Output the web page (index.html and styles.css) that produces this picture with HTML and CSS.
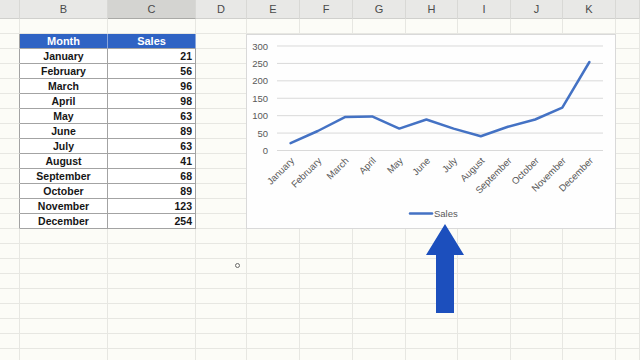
FILE: index.html
```html
<!DOCTYPE html>
<html>
<head>
    <title>Sales Chart</title>
    <link rel="stylesheet" href="styles.css">
</head>
<body>
    <div id="app">
        <div id="colHeads" class="cols"></div>
        <div id="sheet" class="cols"></div>

        <div id="chart">
            <svg id="chartSvg" width="370" height="195" viewBox="246 34 370 195"></svg>
        </div>

        <svg id="arrow" width="50" height="100" viewBox="0 0 50 100">
            <polygon points="25,4 44,35 34,35 34,93 16,93 16,35 6,35" fill="#1c4fbd"/>
        </svg>

        <div id="cursor"></div>
    </div>
    <script>
        var letters = ['', 'B', 'C', 'D', 'E', 'F', 'G', 'H', 'I', 'J', 'K', ''];
        var months = ['January', 'February', 'March', 'April', 'May', 'June', 'July', 'August', 'September', 'October', 'November', 'December'];
        var sales = [21, 56, 96, 98, 63, 89, 63, 41, 68, 89, 123, 254];

        // column letters
        var heads = document.getElementById('colHeads');
        letters.forEach(function(l, i) {
            var h = document.createElement('div');
            h.className = 'colHead' + (l == 'C' ? ' active' : '');
            h.textContent = l;
            heads.appendChild(h);
        });

        // cells
        var sheet = document.getElementById('sheet');
        for (var r = 0; r < 23; r++) {
            for (var c = 0; c < letters.length; c++) {
                var cell = document.createElement('div');
                cell.className = 'cell';
                if (r >= 1 && r <= 13) {
                    if (c == 0) cell.className += ' edge';
                    if (c == 1 || c == 2) {
                        if (r == 1) {
                            cell.className += ' th';
                            cell.textContent = c == 1 ? 'Month' : 'Sales';
                        } else {
                            cell.className += c == 1 ? ' td month' : ' td num';
                            cell.textContent = c == 1 ? months[r - 2] : sales[r - 2];
                        }
                    }
                }
                sheet.appendChild(cell);
            }
        }

        // line chart
        var svg = document.getElementById('chartSvg');
        var left = 277, right = 603, zero = 150.5, scale = 104.5 / 300;
        var step = (right - left) / 12;
        var out = '<rect x="246.5" y="34.5" width="369" height="194" fill="#fefefe" stroke="#d9d9d9"/>';
        for (var v = 0; v <= 300; v += 50) {
            var y = zero - v * scale;
            out += '<line x1="' + left + '" x2="' + right + '" y1="' + y + '" y2="' + y + '" class="grid"/>';
            out += '<text x="268" y="' + (y + 3.5) + '" text-anchor="end" class="lbl">' + v + '</text>';
        }
        var pts = [];
        sales.forEach(function(s, i) {
            var x = left + step / 2 + step * i;
            pts.push(x.toFixed(1) + ',' + (zero - s * scale).toFixed(1));
            var tx = x + 2, ty = 159;
            out += '<text x="' + tx + '" y="' + ty + '" dy=".35em" text-anchor="end" class="lbl" transform="rotate(-45 ' + tx + ' ' + ty + ')">' + months[i] + '</text>';
        });
        out += '<polyline points="' + pts.join(' ') + '" class="series"/>';
        out += '<line x1="410" x2="432" y1="213.5" y2="213.5" class="series"/>';
        out += '<text x="434" y="217" class="lbl">Sales</text>';
        svg.innerHTML = out;
    </script>
</body>
</html>
```

FILE: styles.css
```css
body {
    margin: 0;
    font-family: "Liberation Sans", Arial, sans-serif;
    background: #fcfcf7;
    overflow: hidden;
}
#app {
    position: relative;
    width: 640px;
    height: 360px;
    overflow: hidden;
}
.cols {
    display: grid;
    grid-template-columns: 20px 88px 88px 51px 53px 53px 53px 52px 53px 52px 53px 24px;
}
#colHeads {
    height: 19px;
    background: #e8e8e6;
    border-bottom: 1px solid #d0d0cd;
    box-sizing: border-box;
}
.colHead {
    border-right: 1px solid #d8d8d5;
    font-size: 11px;
    color: #4a4a4a;
    text-align: center;
    line-height: 18px;
}
.colHead.active {
    background: #d4d4d1;
    border-bottom: 1px solid #a9a9a6;
}
#sheet {
    grid-auto-rows: 15px;
}
.cell {
    box-sizing: border-box;
    border-right: 1px solid #e7e7e2;
    border-bottom: 1px solid #e7e7e2;
    font-size: 10.5px;
    font-weight: bold;
    line-height: 14px;
    color: #161616;
    padding: 0 3px;
    white-space: nowrap;
    overflow: hidden;
}
.cell.edge {
    border-right-color: #a3a3a3;
}
.cell.th {
    background: #2f63c4;
    color: #fff;
    text-align: center;
    font-size: 11px;
    border-right-color: #8aa6dc;
    border-bottom-color: #a3a3a3;
}
.cell.td {
    background: #fff;
    border-right-color: #a3a3a3;
    border-bottom-color: #a3a3a3;
}
.cell.month {
    text-align: center;
}
.cell.num {
    text-align: right;
}
#chart {
    position: absolute;
    left: 246px;
    top: 34px;
    width: 370px;
    height: 195px;
}
#chart svg {
    display: block;
}
.grid {
    stroke: #d9d9d9;
    stroke-width: 1;
}
.lbl {
    font-family: "Liberation Sans", Arial, sans-serif;
    font-size: 9.5px;
    fill: #595959;
}
.series {
    fill: none;
    stroke: #4472c4;
    stroke-width: 2.5;
    stroke-linejoin: round;
    stroke-linecap: round;
}
#arrow {
    position: absolute;
    left: 420px;
    top: 220px;
}
#cursor {
    position: absolute;
    left: 235px;
    top: 263px;
    width: 3px;
    height: 3px;
    border: 1.5px solid #6a6a6a;
    border-radius: 50%;
}
```
